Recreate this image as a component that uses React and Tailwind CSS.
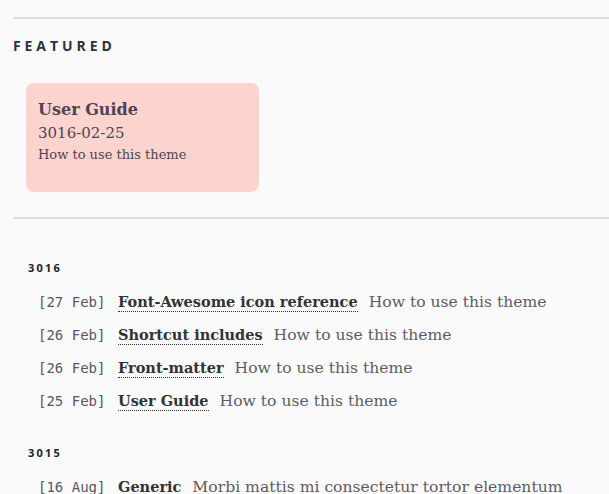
import React from "react";

const featured = { title: "User Guide", date: "3016-02-25", summary: "How to use this theme" };

const archive = [
  {
    year: "3016",
    posts: [
      { day: "27", month: "Feb", title: "Font-Awesome icon reference", summary: "How to use this theme" },
      { day: "26", month: "Feb", title: "Shortcut includes", summary: "How to use this theme" },
      { day: "26", month: "Feb", title: "Front-matter", summary: "How to use this theme" },
      { day: "25", month: "Feb", title: "User Guide", summary: "How to use this theme" },
    ],
  },
  {
    year: "3015",
    posts: [
      { day: "16", month: "Aug", title: "Generic", summary: "Morbi mattis mi consectetur tortor elementum" },
    ],
  },
];

const serif = "font-['DejaVu_Serif',serif]";

const App = () => {
  return (
    <div className="h-[494px] bg-[#fafafa] pl-[13px] pt-[17px] overflow-hidden">
      <hr className="border-0 h-[2px] bg-[#dedede]" />

      <h2 className="mt-[18px] font-['Open_Sans',sans-serif] font-bold text-[14px] tracking-[0.28em] text-[#2b3240] leading-[18px]">
        FEATURED
      </h2>

      <div className="mt-[28px] ml-[13px] w-[233px] h-[109px] rounded-lg bg-[#fcd3cd] px-3 pt-[16px] text-[#4b4654]">
        <div className={`${serif} font-bold text-[16px] leading-[22px]`}>{featured.title}</div>
        <div className={`${serif} text-[15px] leading-[24px]`}>{featured.date}</div>
        <div className={`${serif} text-[13px] leading-[20px]`}>{featured.summary}</div>
      </div>

      <hr className="mt-[25px] border-0 h-[2px] bg-[#dedede]" />

      <div className="mt-[41px]">
        {archive.map((group) => (
          <section key={group.year} className="mb-[32px]">
            <h3 className="ml-[15px] font-['Open_Sans',sans-serif] font-bold text-[11px] tracking-[0.2em] text-[#222] leading-[16px]">
              {group.year}
            </h3>
            <ul className="mt-[15px] ml-[25px] flex flex-col gap-[10px]">
              {group.posts.map((post, i) => (
                <li key={i} className="flex items-baseline h-[23px] whitespace-nowrap">
                  <span className="font-['DejaVu_Sans_Mono',monospace] text-[14px] text-[#5a5566] w-[80px]">
                    [{post.day}&nbsp;{post.month}]
                  </span>
                  <a
                    className={`${serif} font-bold text-[14.5px] text-[#333] border-b border-dotted border-[#333] leading-[19px]`}
                  >
                    {post.title}
                  </a>
                  <span className={`${serif} ml-[11px] text-[15.6px] text-[#5f5a66]`}>{post.summary}</span>
                </li>
              ))}
            </ul>
          </section>
        ))}
      </div>
    </div>
  );
};

export default App;
